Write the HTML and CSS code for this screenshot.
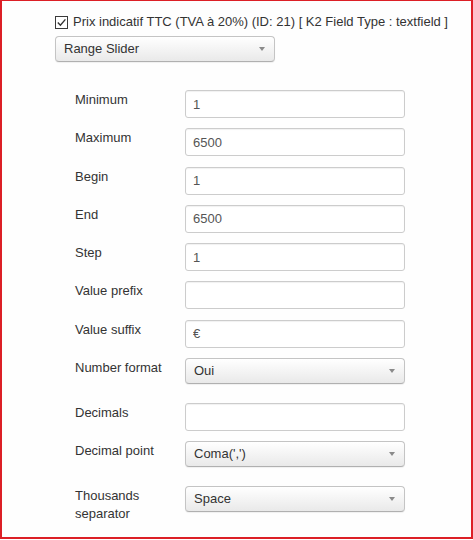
FILE: index.html
```html
<!DOCTYPE html>
<html lang="fr">
<head>
<meta charset="utf-8">
<title>Range Slider</title>
<link rel="stylesheet" href="styles.css">
</head>
<body>
<div class="frame">
  <div class="head">
    <span class="check"><svg width="11" height="11" viewBox="0 0 11 11"><path d="M1.8 5.6 L4.4 8.2 L9.4 2.4" fill="none" stroke="#333" stroke-width="1.4"/></svg></span>
    <span class="head-text">Prix indicatif TTC (TVA à 20%) (ID: 21) [ K2 Field Type : textfield ]</span>
  </div>
  <div class="select select-type"><select><option>Range Slider</option></select></div>

  <div class="fields">
    <div class="field"><label>Minimum</label><input type="text" value="1"></div>
    <div class="field"><label>Maximum</label><input type="text" value="6500"></div>
    <div class="field"><label>Begin</label><input type="text" value="1"></div>
    <div class="field"><label>End</label><input type="text" value="6500"></div>
    <div class="field"><label>Step</label><input type="text" value="1"></div>
    <div class="field"><label>Value prefix</label><input type="text" value=""></div>
    <div class="field"><label>Value suffix</label><input type="text" value="€"></div>
    <div class="field field-select"><label>Number format</label><div class="select"><select><option>Oui</option></select></div></div>
    <div class="field"><label>Decimals</label><input type="text" value=""></div>
    <div class="field field-select"><label>Decimal point</label><div class="select"><select><option>Coma(',')</option></select></div></div>
    <div class="field field-select"><label>Thousands separator</label><div class="select"><select><option>Space</option></select></div></div>
  </div>
</div>
</body>
</html>
```

FILE: styles.css
```css
html, body {
  margin: 0;
  padding: 0;
  background: #ffffff;
}

.frame {
  box-sizing: border-box;
  width: 473px;
  height: 539px;
  border: 2px solid #dc1f26;
  border-top-width: 1px;
  padding: 12px 0 0 53px;
  font-family: "Liberation Sans", Arial, sans-serif;
  font-size: 13px;
  color: #333333;
  background: #fefefe;
}

.head {
  display: flex;
  align-items: center;
  height: 18px;
  line-height: 18px;
}

.check {
  box-sizing: border-box;
  width: 13px;
  height: 13px;
  border: 1px solid #3a3a3a;
  background: #ffffff;
  display: flex;
  align-items: center;
  justify-content: center;
  margin-right: 5px;
}

.check svg {
  display: block;
}

.head-text {
  white-space: nowrap;
}

.select {
  position: relative;
  width: 220px;
  height: 26px;
}

.select-type {
  margin-top: 5px;
}

.select select {
  -webkit-appearance: none;
  appearance: none;
  box-sizing: border-box;
  width: 100%;
  height: 100%;
  margin: 0;
  padding: 0 24px 0 8px;
  border: 1px solid #c4c4c4;
  border-bottom-color: #b0b0b0;
  border-radius: 4px;
  background: linear-gradient(#ffffff, #e9e9e9);
  box-shadow: 0 1px 1px rgba(0, 0, 0, 0.06);
  font-family: "Liberation Sans", Arial, sans-serif;
  font-size: 13px;
  color: #333333;
  line-height: 24px;
}

.select::after {
  content: "";
  position: absolute;
  right: 10px;
  top: 11px;
  width: 0;
  height: 0;
  border-left: 3.5px solid transparent;
  border-right: 3.5px solid transparent;
  border-top: 4px solid #8a8a8a;
}

.fields {
  margin: 28px 0 0 20px;
}

.field {
  display: flex;
  align-items: flex-start;
  margin-bottom: 10.3px;
}

.field-select {
  margin-bottom: 19px;
}

.field label {
  width: 110px;
  flex: none;
  line-height: 18px;
  padding-top: 1px;
  padding-right: 8px;
  box-sizing: border-box;
  color: #333333;
}

.field input {
  box-sizing: border-box;
  width: 220px;
  height: 28px;
  margin: 0;
  padding: 0 7px;
  border: 1px solid #cccccc;
  border-radius: 3px;
  background: #ffffff;
  box-shadow: inset 0 1px 1px rgba(0, 0, 0, 0.06);
  font-family: "Liberation Sans", Arial, sans-serif;
  font-size: 13px;
  color: #555555;
  outline: none;
}
```
